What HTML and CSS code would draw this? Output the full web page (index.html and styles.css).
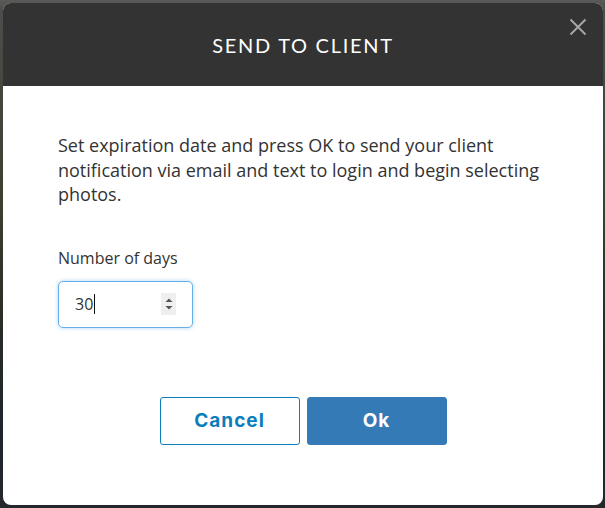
FILE: index.html
```html
<!DOCTYPE html>
<html>
<head>
<meta charset="utf-8">
<link rel="stylesheet" href="styles.css">
</head>
<body>
<div class="backdrop">
  <div class="modal">
    <div class="modal-header">
      <h1 class="title">SEND TO CLIENT</h1>
      <button class="close" aria-label="Close">
        <svg width="18" height="18" viewBox="0 0 18 18"><path d="M1.5 1.5 L16.5 16.5 M16.5 1.5 L1.5 16.5" stroke="#a6a6a6" stroke-width="2" fill="none"/></svg>
      </button>
    </div>
    <div class="modal-body">
      <p class="intro">Set expiration date and press OK to send your client notification via email and text to login and begin selecting photos.</p>
      <label class="label">Number of days</label>
      <div class="input">
        <span class="value">30</span><span class="caret"></span>
        <span class="spinner">
          <svg width="10" height="16" viewBox="0 0 10 16"><path d="M1.5 6 L5 2.5 L8.5 6 Z M1.5 10 L5 13.5 L8.5 10 Z" fill="#555"/></svg>
        </span>
      </div>
      <div class="actions">
        <button class="btn btn-cancel">Cancel</button>
        <button class="btn btn-ok">Ok</button>
      </div>
    </div>
  </div>
</div>
</body>
</html>
```
FILE: styles.css
```css
html, body {
  margin: 0;
  padding: 0;
}
body {
  width: 605px;
  height: 508px;
  overflow: hidden;
  background: linear-gradient(to bottom, #5a5a58 0, #4d4d4b 10px, #3b4030 40%, #2b2f26 60%, #1f242c 85%, #25272b 100%);
}
.backdrop {
  padding: 3px 2px 3px 3px;
}
.modal {
  width: 600px;
  height: 502px;
  background: #fff;
  border-radius: 8px;
  overflow: hidden;
  display: flex;
  flex-direction: column;
}
.modal-header {
  height: 83px;
  background: #333333;
  display: flex;
  align-items: center;
  justify-content: center;
  position: relative;
}
.title {
  margin: 0;
  font-family: "Lato", "Noto Sans", sans-serif;
  font-weight: 400;
  font-size: 20px;
  letter-spacing: 1.7px;
  color: #ffffff;
}
.close {
  position: absolute;
  top: 15px;
  right: 16px;
  background: none;
  border: 0;
  padding: 0;
  width: 18px;
  height: 18px;
  display: flex;
}
.modal-body {
  flex: 1;
  padding: 47px 55px 0 55px;
  display: flex;
  flex-direction: column;
}
.intro {
  margin: 0;
  font-family: "Open Sans", sans-serif;
  font-size: 18px;
  line-height: 24.5px;
  color: #333333;
}
.label {
  margin-top: 40px;
  font-family: "Open Sans", sans-serif;
  font-size: 16px;
  line-height: 22px;
  color: #333333;
}
.input {
  margin-top: 12px;
  width: 135px;
  height: 47px;
  box-sizing: border-box;
  border: 1px solid #66afe9;
  border-radius: 5px;
  box-shadow: 0 0 4px rgba(102, 175, 233, 0.55);
  display: flex;
  align-items: center;
  padding: 0 16px 0 16px;
  font-family: "Open Sans", sans-serif;
  font-size: 16px;
  color: #333;
}
.caret {
  width: 1px;
  height: 20px;
  background: #111;
  margin-left: 1px;
}
.spinner {
  margin-left: auto;
  width: 15px;
  height: 22px;
  background: #efefef;
  display: flex;
  align-items: center;
  justify-content: center;
}
.actions {
  margin-top: 69px;
  display: flex;
  justify-content: center;
  gap: 7px;
}
.btn {
  width: 140px;
  height: 48px;
  box-sizing: border-box;
  border-radius: 3px;
  font-family: "Inter", "Noto Sans", sans-serif;
  font-weight: 700;
  font-size: 19px;
  letter-spacing: 1px;
  cursor: pointer;
}
.btn-cancel {
  background: #ffffff;
  border: 1px solid #0b7dbb;
  color: #0b7dbb;
}
.btn-ok {
  background: #337ab7;
  border: 1px solid #337ab7;
  color: #ffffff;
}
```
